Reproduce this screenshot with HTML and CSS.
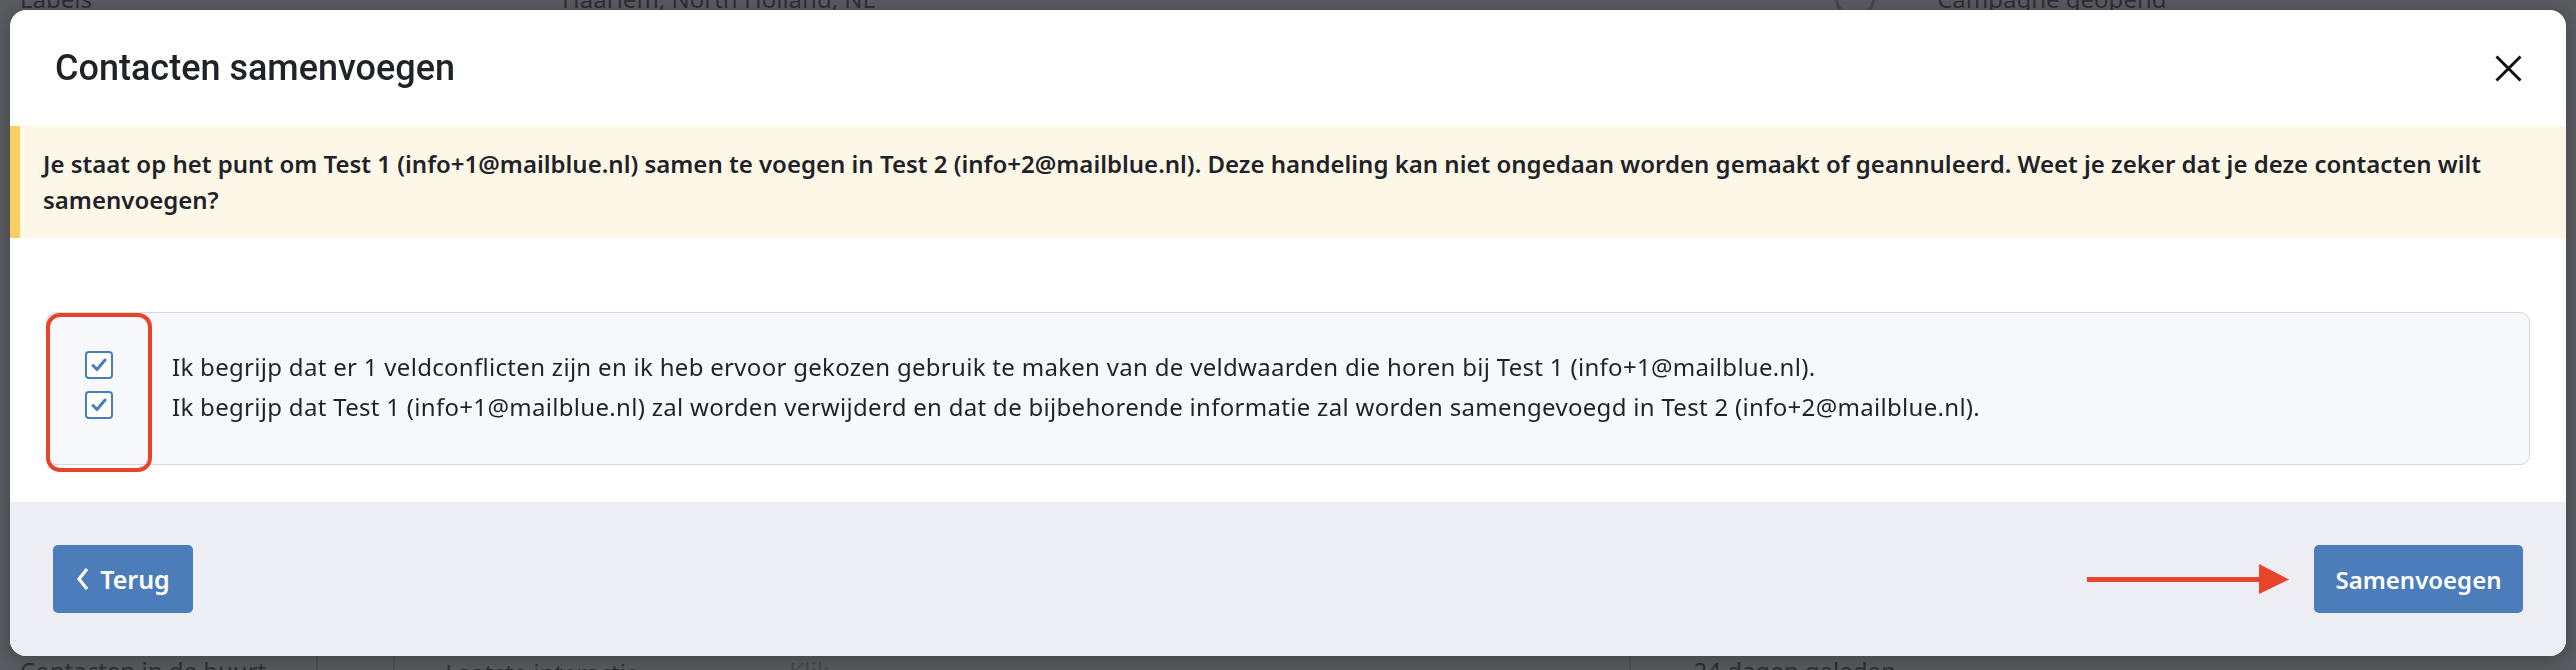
FILE: index.html
```html
<!DOCTYPE html>
<html>
<head>
	<meta charset="utf-8">
	<title>Contacten samenvoegen</title>
	<link rel="stylesheet" href="styles.css">
</head>
<body>

	<div class="pagina">
		<div class="pagina-boven">
			<span class="pb-labels">Labels</span>
			<span class="pb-plaats">Haarlem, North Holland, NL</span>
			<span class="pb-icoon"></span>
			<span class="pb-campagne">Campagne geopend</span>
		</div>
		<div class="pagina-onder">
			<span class="po-buurt">Contacten in de buurt</span>
			<span class="po-lijn"></span>
			<span class="po-lijn"></span>
			<span class="po-interactie">Laatste interactie</span>
			<span class="po-klik">Klik</span>
			<span class="po-lijn po-lijn-rechts"></span>
			<span class="po-dagen">24 dagen geleden</span>
		</div>
	</div>

	<div class="overlay">
		<div class="modal">

			<div class="modal-kop">
				<h2>Contacten samenvoegen</h2>
				<button class="sluiten" aria-label="Sluiten">
					<svg width="27" height="27" viewBox="0 0 27 27"><path d="M1.5 1.5 L25.5 25.5 M25.5 1.5 L1.5 25.5" stroke="#111" stroke-width="3" fill="none"/></svg>
				</button>
			</div>

			<div class="waarschuwing">
				Je staat op het punt om Test 1 (info+1@mailblue.nl) samen te voegen in Test 2 (info+2@mailblue.nl). Deze handeling kan niet ongedaan worden gemaakt of geannuleerd. Weet je zeker dat je deze contacten wilt samenvoegen?
			</div>

			<div class="modal-inhoud">
				<div class="bevestig">
					<label class="bevestig-regel">
						<span class="vinkje"><svg width="16" height="14" viewBox="0 0 16 14"><path d="M2 7.5 L6 11.5 L14 2" stroke="#4a7dba" stroke-width="3" fill="none" stroke-linecap="round" stroke-linejoin="round"/></svg></span>
						<span>Ik begrijp dat er 1 veldconflicten zijn en ik heb ervoor gekozen gebruik te maken van de veldwaarden die horen bij Test 1 (info+1@mailblue.nl).</span>
					</label>
					<label class="bevestig-regel">
						<span class="vinkje"><svg width="16" height="14" viewBox="0 0 16 14"><path d="M2 7.5 L6 11.5 L14 2" stroke="#4a7dba" stroke-width="3" fill="none" stroke-linecap="round" stroke-linejoin="round"/></svg></span>
						<span>Ik begrijp dat Test 1 (info+1@mailblue.nl) zal worden verwijderd en dat de bijbehorende informatie zal worden samengevoegd in Test 2 (info+2@mailblue.nl).</span>
					</label>
					<span class="markering"></span>
				</div>
			</div>

			<div class="modal-voet">
				<button class="knop knop-terug">
					<svg width="14" height="24" viewBox="0 0 14 24"><path d="M11 2 L3 12 L11 22" stroke="#fff" stroke-width="3.2" fill="none"/></svg>
					Terug
				</button>
				<div class="voet-rechts">
					<svg class="pijl" width="202" height="30" viewBox="0 0 202 30"><rect x="0" y="13" width="176" height="5" fill="#e8432b"/><path d="M172 0 L202 15.5 L172 30 Z" fill="#e8432b"/></svg>
					<button class="knop knop-samen">Samenvoegen</button>
				</div>
			</div>

		</div>
	</div>

</body>
</html>
```

FILE: styles.css
```css
*{box-sizing: border-box;}
body{
	margin: 0;
	height: 670px;
	overflow: hidden;
	background: #5a5b60;
	font-family: "Noto Sans", "Liberation Sans", sans-serif;
	color: #1f2328;
}

/* pagina achter de overlay */
.pagina{
	height: 670px;
	display: flex;
	flex-direction: column;
	justify-content: space-between;
	color: #2d2f34;
	font-size: 24px;
}
.pagina-boven{
	display: flex;
	align-items: center;
	height: 28px;
	margin-top: -16px;
}
.pb-labels{margin-left: 20px;}
.pb-plaats{margin-left: 470px;}
.pb-icoon{
	width: 40px;
	height: 40px;
	margin-left: 960px;
	border: 3px solid #45474c;
	border-radius: 50%;
}
.pb-campagne{margin-left: 62px;}

.pagina-onder{
	display: flex;
	align-items: flex-start;
	height: 14px;
	overflow: visible;
}
.po-buurt{margin-left: 20px; line-height: 30px;}
.po-lijn{width: 2px; height: 14px; background: #4d4f54; margin-left: 50px;}
.po-lijn + .po-lijn{margin-left: 75px;}
.po-interactie{margin-left: 50px; line-height: 30px; margin-top: 2px;}
.po-klik{margin-left: 150px; line-height: 30px; color: #474950;}
.po-lijn-rechts{margin-left: 800px;}
.po-dagen{margin-left: 62px; line-height: 30px;}

/* modal */
.overlay{
	position: fixed;
	top: 0;
	left: 0;
	right: 0;
	bottom: 0;
	padding: 10px;
}
.modal{
	height: 646px;
	background: #fff;
	border-radius: 16px;
	overflow: hidden;
	display: flex;
	flex-direction: column;
	box-shadow: 0 4px 20px rgba(0,0,0,.25);
}

.modal-kop{
	height: 116px;
	flex: none;
	display: flex;
	align-items: center;
	justify-content: space-between;
	padding: 0 44px 0 45px;
}
.modal-kop h2{
	margin: 0;
	font-family: Roboto, "Liberation Sans", sans-serif;
	font-size: 36px;
	font-weight: 500;
	color: #1f2328;
}
.sluiten{
	background: none;
	border: 0;
	padding: 0;
	display: flex;
	cursor: pointer;
}

.waarschuwing{
	flex: none;
	background: #fdf7e8;
	border-left: 10px solid #f6cf60;
	padding: 20px 43px 20px 23px;
	font-size: 24px;
	font-weight: 600;
	line-height: 36px;
}

.modal-inhoud{
	flex: 1;
	padding: 74px 36px 0;
}
.bevestig{
	position: relative;
	height: 153px;
	background: #f7f8fc;
	border: 1px solid #d6d8e1;
	border-radius: 10px;
	padding: 34px 0 0 38px;
}
.bevestig-regel{
	display: flex;
	align-items: flex-start;
	gap: 59px;
	font-size: 24px;
	line-height: 40px;
	letter-spacing: 0.3px;
}
.vinkje{
	flex: none;
	width: 28px;
	height: 28px;
	margin-top: 4px;
	background: #fff;
	border: 2px solid #4a7dba;
	border-radius: 4px;
	display: flex;
	align-items: center;
	justify-content: center;
}
.markering{
	position: absolute;
	left: -1px;
	top: 0;
	width: 106px;
	height: 159px;
	border: 4px solid #e8432b;
	border-radius: 14px;
}

.modal-voet{
	flex: none;
	height: 154px;
	background: #edeef3;
	padding: 0 43px;
	display: flex;
	align-items: center;
	justify-content: space-between;
}
.voet-rechts{
	display: flex;
	align-items: center;
	gap: 25px;
}
.knop{
	height: 68px;
	background: #4a7dba;
	color: #fff;
	border: 0;
	border-radius: 5px;
	font-family: inherit;
	font-size: 24px;
	font-weight: 600;
	display: inline-flex;
	align-items: center;
	justify-content: center;
	cursor: pointer;
}
.knop-terug{width: 140px; gap: 10px; font-size: 25px;}
.knop-samen{width: 209px;}
.pijl{display: block;}
```
